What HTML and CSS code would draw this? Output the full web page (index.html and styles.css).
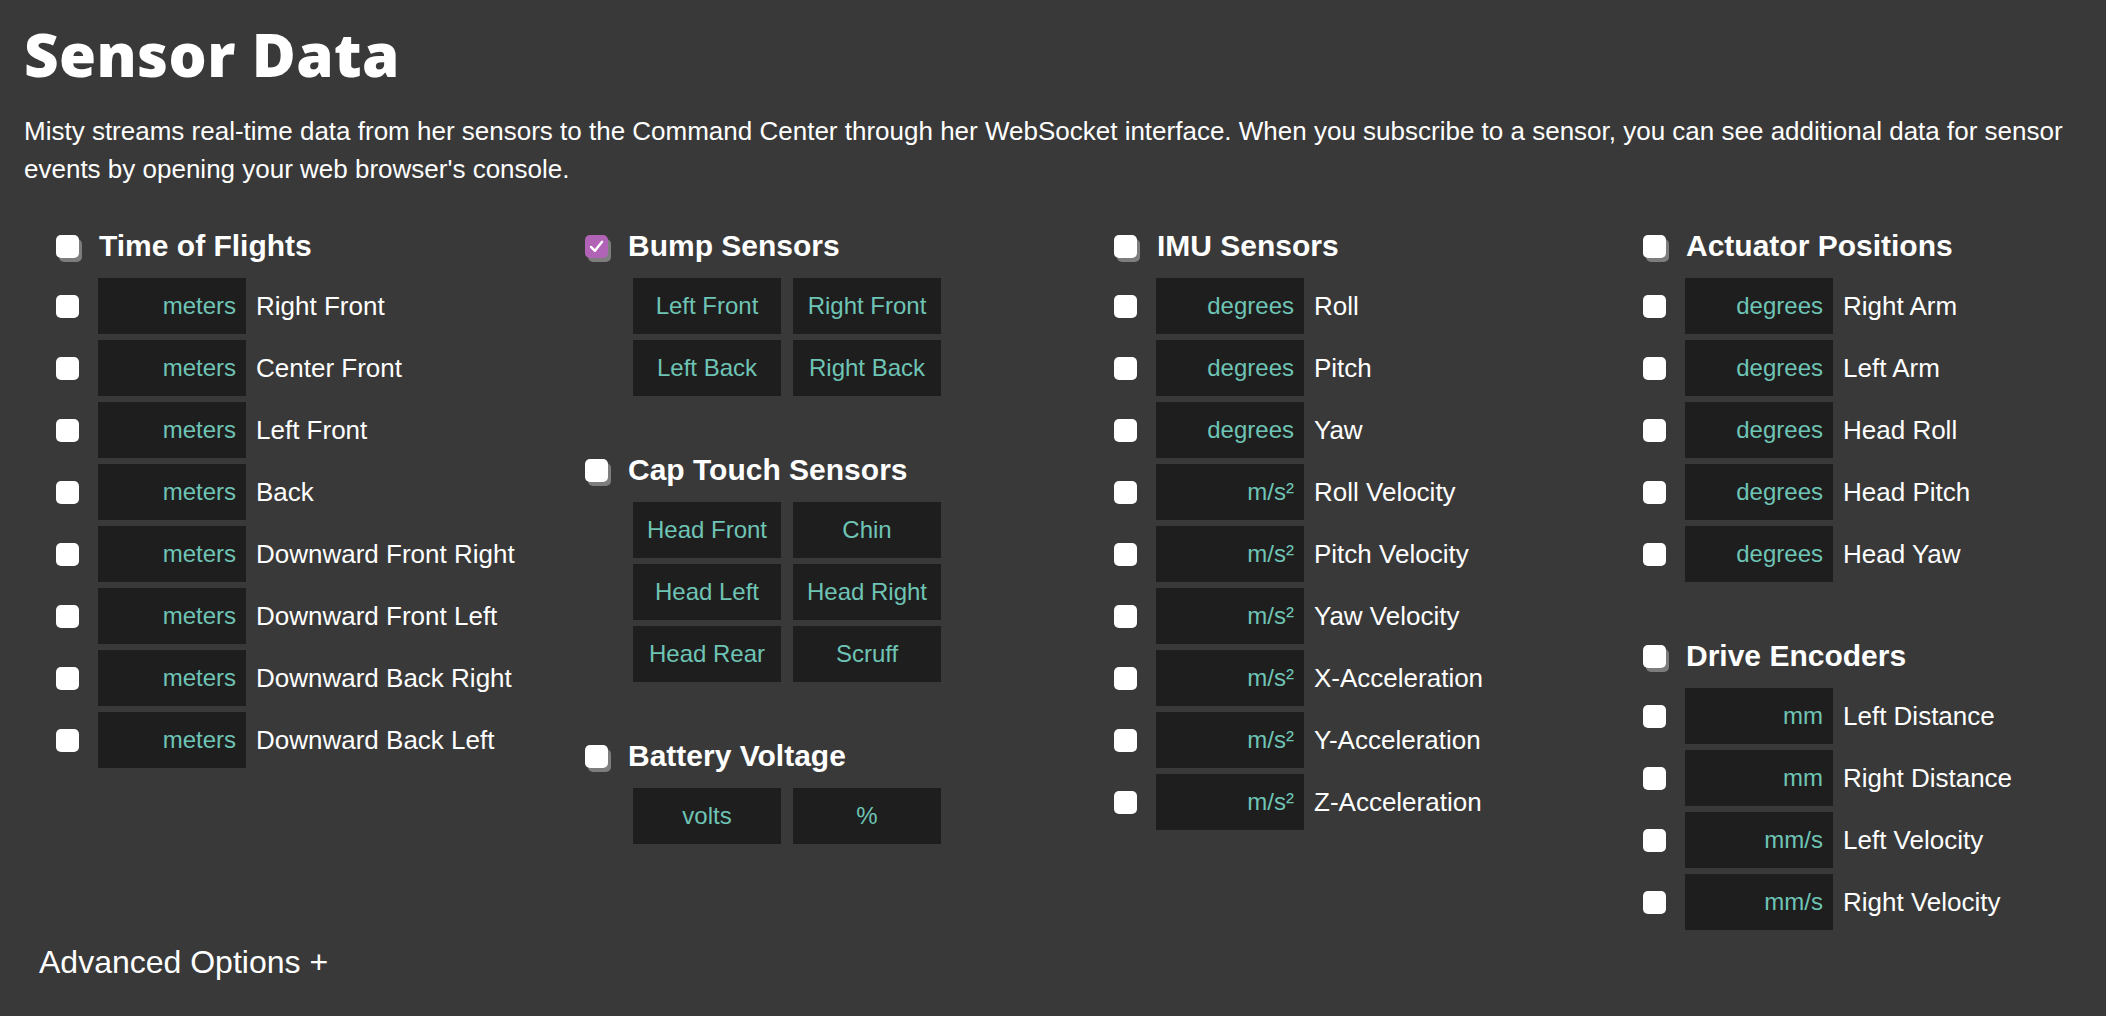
FILE: index.html
```html
<!DOCTYPE html>
<html lang="en">
<head>
<meta charset="utf-8">
<title>Sensor Data</title>
<link rel="stylesheet" href="styles.css">
</head>
<body>
<main class="page">
  <h1 class="title">Sensor Data</h1>
  <p class="intro">Misty streams real-time data from her sensors to the Command Center through her WebSocket interface. When you subscribe to a sensor, you can see additional data for sensor events by opening your web browser's console.</p>

  <div class="sections">
    <div class="column">
      <section class="group">
        <div class="group-head"><span class="check check-head"></span><h2>Time of Flights</h2></div>
        <ul class="rows">
          <li class="row"><span class="check"></span><span class="value">meters</span><span class="label">Right Front</span></li>
          <li class="row"><span class="check"></span><span class="value">meters</span><span class="label">Center Front</span></li>
          <li class="row"><span class="check"></span><span class="value">meters</span><span class="label">Left Front</span></li>
          <li class="row"><span class="check"></span><span class="value">meters</span><span class="label">Back</span></li>
          <li class="row"><span class="check"></span><span class="value">meters</span><span class="label">Downward Front Right</span></li>
          <li class="row"><span class="check"></span><span class="value">meters</span><span class="label">Downward Front Left</span></li>
          <li class="row"><span class="check"></span><span class="value">meters</span><span class="label">Downward Back Right</span></li>
          <li class="row"><span class="check"></span><span class="value">meters</span><span class="label">Downward Back Left</span></li>
        </ul>
      </section>
    </div>

    <div class="column">
      <section class="group">
        <div class="group-head"><span class="check check-head checked"><svg viewBox="0 0 24 24" width="19" height="19"><polyline points="5,12.5 10,17.5 19,6" fill="none" stroke="#fff" stroke-width="3" stroke-linecap="round" stroke-linejoin="round"/></svg></span><h2>Bump Sensors</h2></div>
        <div class="tiles">
          <span class="tile">Left Front</span>
          <span class="tile">Right Front</span>
          <span class="tile">Left Back</span>
          <span class="tile">Right Back</span>
        </div>
      </section>
      <section class="group">
        <div class="group-head"><span class="check check-head"></span><h2>Cap Touch Sensors</h2></div>
        <div class="tiles">
          <span class="tile">Head Front</span>
          <span class="tile">Chin</span>
          <span class="tile">Head Left</span>
          <span class="tile">Head Right</span>
          <span class="tile">Head Rear</span>
          <span class="tile">Scruff</span>
        </div>
      </section>
      <section class="group">
        <div class="group-head"><span class="check check-head"></span><h2>Battery Voltage</h2></div>
        <div class="tiles">
          <span class="tile">volts</span>
          <span class="tile">%</span>
        </div>
      </section>
    </div>

    <div class="column">
      <section class="group">
        <div class="group-head"><span class="check check-head"></span><h2>IMU Sensors</h2></div>
        <ul class="rows">
          <li class="row"><span class="check"></span><span class="value">degrees</span><span class="label">Roll</span></li>
          <li class="row"><span class="check"></span><span class="value">degrees</span><span class="label">Pitch</span></li>
          <li class="row"><span class="check"></span><span class="value">degrees</span><span class="label">Yaw</span></li>
          <li class="row"><span class="check"></span><span class="value">m/s²</span><span class="label">Roll Velocity</span></li>
          <li class="row"><span class="check"></span><span class="value">m/s²</span><span class="label">Pitch Velocity</span></li>
          <li class="row"><span class="check"></span><span class="value">m/s²</span><span class="label">Yaw Velocity</span></li>
          <li class="row"><span class="check"></span><span class="value">m/s²</span><span class="label">X-Acceleration</span></li>
          <li class="row"><span class="check"></span><span class="value">m/s²</span><span class="label">Y-Acceleration</span></li>
          <li class="row"><span class="check"></span><span class="value">m/s²</span><span class="label">Z-Acceleration</span></li>
        </ul>
      </section>
    </div>

    <div class="column">
      <section class="group">
        <div class="group-head"><span class="check check-head"></span><h2>Actuator Positions</h2></div>
        <ul class="rows">
          <li class="row"><span class="check"></span><span class="value">degrees</span><span class="label">Right Arm</span></li>
          <li class="row"><span class="check"></span><span class="value">degrees</span><span class="label">Left Arm</span></li>
          <li class="row"><span class="check"></span><span class="value">degrees</span><span class="label">Head Roll</span></li>
          <li class="row"><span class="check"></span><span class="value">degrees</span><span class="label">Head Pitch</span></li>
          <li class="row"><span class="check"></span><span class="value">degrees</span><span class="label">Head Yaw</span></li>
        </ul>
      </section>
      <section class="group">
        <div class="group-head"><span class="check check-head"></span><h2>Drive Encoders</h2></div>
        <ul class="rows">
          <li class="row"><span class="check"></span><span class="value">mm</span><span class="label">Left Distance</span></li>
          <li class="row"><span class="check"></span><span class="value">mm</span><span class="label">Right Distance</span></li>
          <li class="row"><span class="check"></span><span class="value">mm/s</span><span class="label">Left Velocity</span></li>
          <li class="row"><span class="check"></span><span class="value">mm/s</span><span class="label">Right Velocity</span></li>
        </ul>
      </section>
    </div>
  </div>

  <div class="advanced">Advanced Options +</div>
</main>
</body>
</html>
```

FILE: styles.css
```css
html, body {
  margin: 0;
  padding: 0;
  background: #393939;
}

body {
  color: #ffffff;
  font-family: "Liberation Sans", Arial, Helvetica, sans-serif;
  overflow: hidden;
}

.page {
  padding: 19px 24px 0 24px;
}

.title {
  margin: 0;
  font-family: "Open Sans", Lato, sans-serif;
  font-weight: 800;
  font-size: 60px;
  line-height: 70px;
  letter-spacing: 0.4px;
}

.intro {
  margin: 23px 0 0 0;
  font-size: 26px;
  line-height: 38px;
}

.sections {
  margin-top: 40px;
  padding-left: 32px;
  display: grid;
  grid-template-columns: 529px 529px 529px 1fr;
  align-items: start;
}

.group + .group {
  margin-top: 56px;
}

.group-head {
  display: flex;
  align-items: center;
  height: 36px;
  margin-bottom: 14px;
}

.group-head h2 {
  margin: 0 0 0 20px;
  font-size: 30px;
  line-height: 36px;
  font-weight: 700;
}

.check {
  flex: none;
  width: 23px;
  height: 23px;
  border-radius: 5px;
  background: #ffffff;
  box-sizing: border-box;
}

.check-head {
  box-shadow: 3px 4px 0 #7d7d7d;
  display: flex;
  align-items: center;
  justify-content: center;
}

.check-head.checked {
  background: #b163b6;
}

.rows {
  list-style: none;
  margin: 0;
  padding: 0;
  display: flex;
  flex-direction: column;
  gap: 6px;
}

.row {
  display: flex;
  align-items: center;
  height: 56px;
}

.value {
  margin-left: 19px;
  width: 148px;
  height: 56px;
  box-sizing: border-box;
  padding-right: 10px;
  background: #1e1e1e;
  color: #6ec4b5;
  font-size: 24px;
  display: flex;
  align-items: center;
  justify-content: flex-end;
}

.label {
  margin-left: 10px;
  font-size: 26px;
  white-space: nowrap;
}

.tiles {
  margin-left: 48px;
  display: grid;
  grid-template-columns: 148px 148px;
  column-gap: 12px;
  row-gap: 6px;
}

.tile {
  height: 56px;
  background: #1e1e1e;
  color: #6ec4b5;
  font-size: 24px;
  display: flex;
  align-items: center;
  justify-content: center;
  white-space: nowrap;
}

.advanced {
  margin: 14px 0 0 15px;
  font-size: 32px;
}
```
